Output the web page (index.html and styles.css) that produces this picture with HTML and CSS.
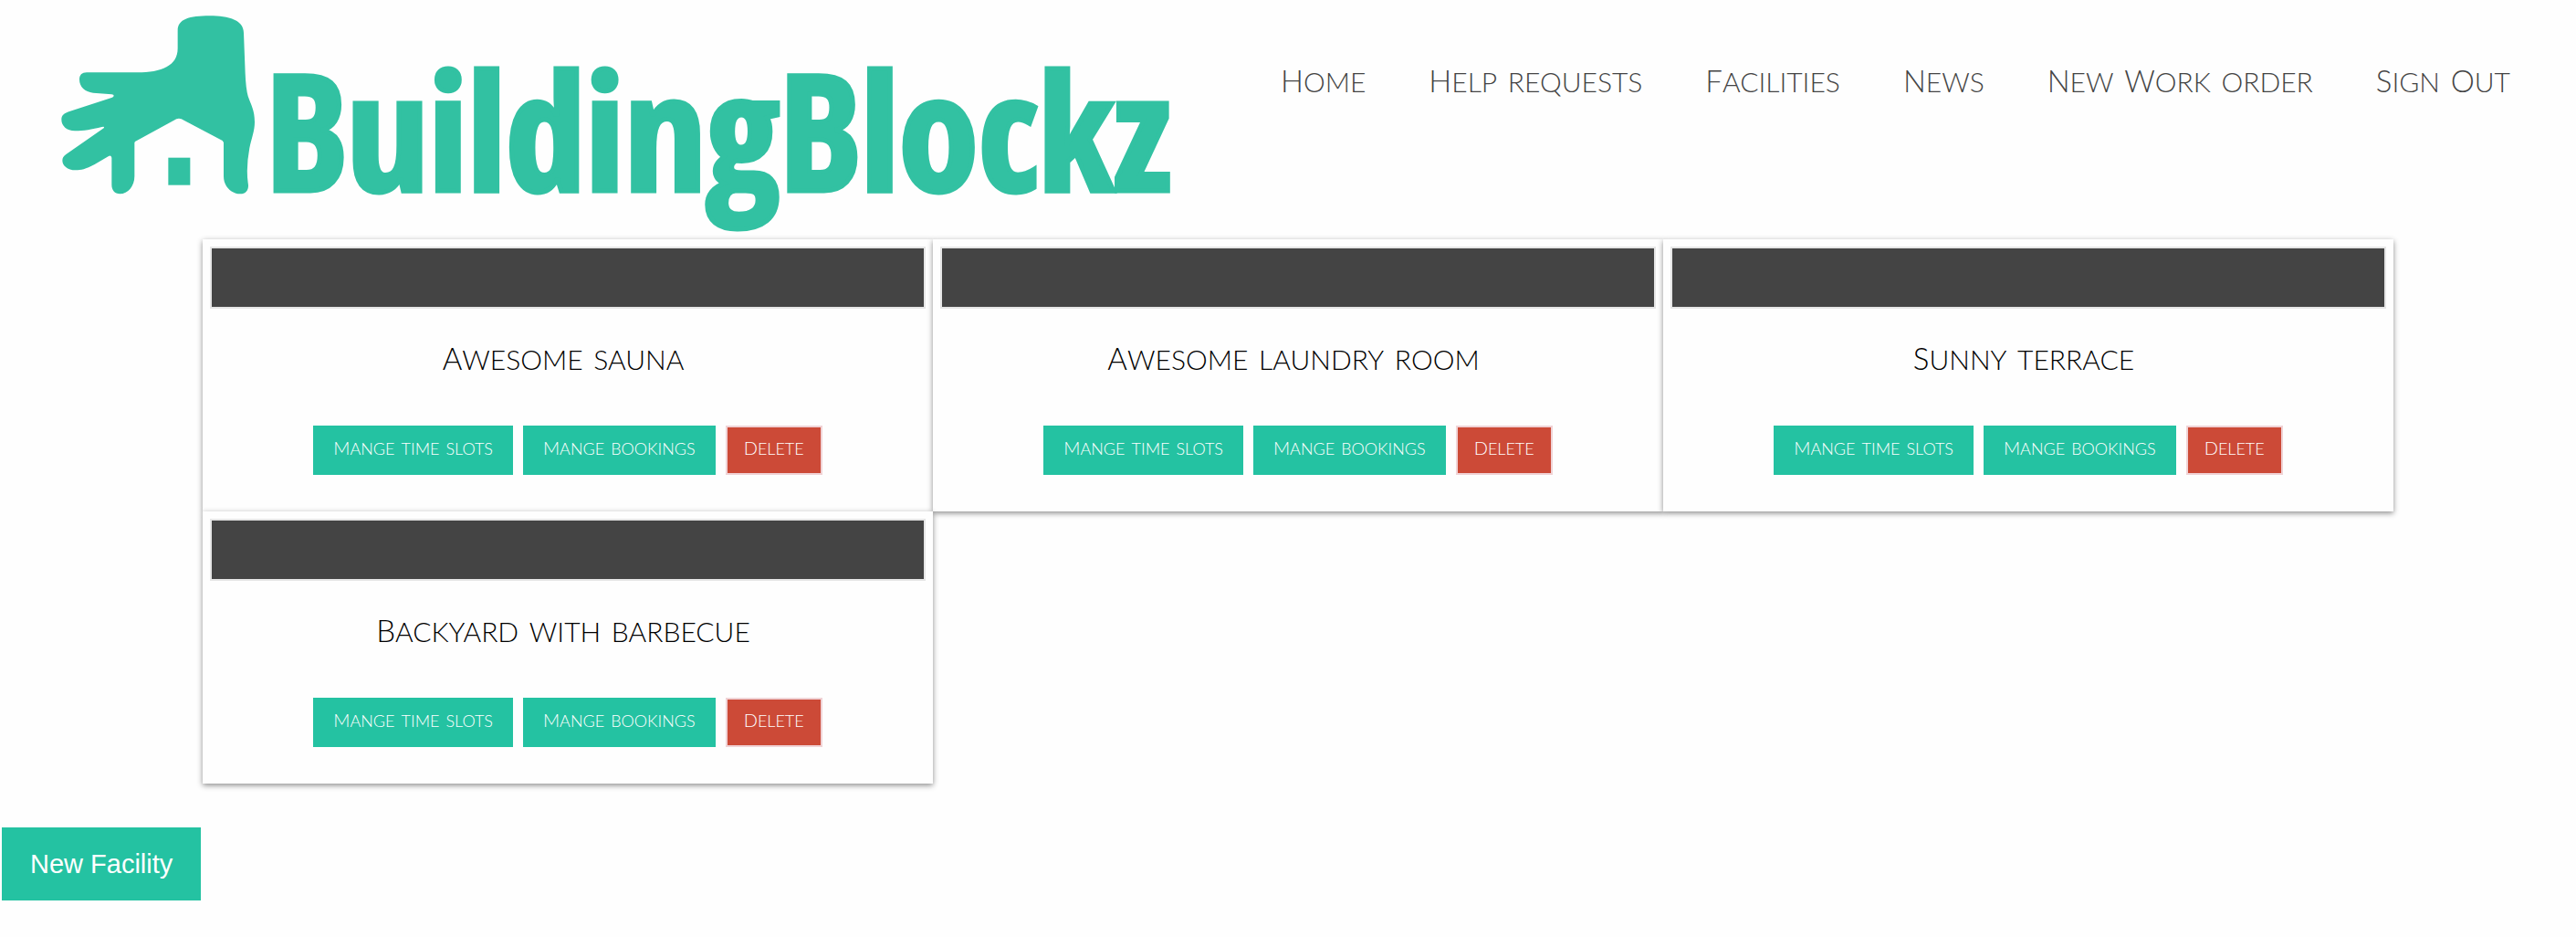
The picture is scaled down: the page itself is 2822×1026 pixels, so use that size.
FILE: index.html
```
<!DOCTYPE html>
<html lang="en">
<head>
<meta charset="utf-8">
<title>BuildingBlockz – Facilities</title>
<link rel="stylesheet" href="styles.css">
</head>
<body>
<header class="site-header">
  <a class="logo" href="#">
    <svg class="logo-mark" viewBox="50 50 636 588" aria-hidden="true">
      <path d="M433 100C433 62 470 51 538 51C605 51 650 66 650 108L655 240Q657 290 664 315C674 345 686 360 686 400C686 430 676 450 669 485Q657 550 664 600C668 620 660 636 638 636C610 636 584 612 584 578V467L580 461L445 390Q437 386 429 390L293 464L291 468V578C291 610 270 636 243 636C226 636 216 624 216 606V517Q214 508 206 512L160 539C130 555 115 558 98 558C70 558 54 542 54 526C54 517 58 512 66 506L190 420Q194 413 184 416C150 424 125 429 95 429C68 429 51 412 51 392C51 378 60 371 75 366L218 319Q229 311 216 309L155 304C128 301 110 284 110 260C110 246 118 237 134 237H300C380 237 433 215 433 158Z"/>
      <path d="M402 517H474V607H402Z"/>
    </svg>
    <span class="logo-text">BuildingBlockz</span>
  </a>
  <nav class="site-nav">
    <a class="caps" href="#">Home</a>
    <a class="caps" href="#">Help requests</a>
    <a class="caps" href="#">Facilities</a>
    <a class="caps" href="#">News</a>
    <a class="caps" href="#">New <span class="word">Work</span> order</a>
    <a class="caps" href="#">Sign <span class="word">Out</span></a>
  </nav>
</header>
<main>
  <section class="facilities">
    <article class="card">
      <div class="card-photo"></div>
      <h2 class="card-title caps">Awesome sauna</h2>
      <div class="card-actions">
        <a class="btn" href="#">Mange time slots</a>
        <a class="btn" href="#">Mange bookings</a>
        <button class="btn btn-delete" type="button">Delete</button>
      </div>
    </article>
    <article class="card">
      <div class="card-photo"></div>
      <h2 class="card-title caps">Awesome laundry room</h2>
      <div class="card-actions">
        <a class="btn" href="#">Mange time slots</a>
        <a class="btn" href="#">Mange bookings</a>
        <button class="btn btn-delete" type="button">Delete</button>
      </div>
    </article>
    <article class="card">
      <div class="card-photo"></div>
      <h2 class="card-title caps">Sunny terrace</h2>
      <div class="card-actions">
        <a class="btn" href="#">Mange time slots</a>
        <a class="btn" href="#">Mange bookings</a>
        <button class="btn btn-delete" type="button">Delete</button>
      </div>
    </article>
    <article class="card">
      <div class="card-photo"></div>
      <h2 class="card-title caps">Backyard with barbecue</h2>
      <div class="card-actions">
        <a class="btn" href="#">Mange time slots</a>
        <a class="btn" href="#">Mange bookings</a>
        <button class="btn btn-delete" type="button">Delete</button>
      </div>
    </article>
  </section>
  <a class="new-facility" href="#">New Facility</a>
</main>
</body>
</html>
```
FILE: styles.css
```
* { box-sizing: border-box; }

body {
  margin: 0;
  background: #fefefe;
  color: #000;
  font-family: Lato, "Open Sans", sans-serif;
  font-weight: 300;
}

a { color: inherit; text-decoration: none; }

/* Small caps with an initial only slightly taller than the rest */
.caps {
  font-size: 43px;
  line-height: 48px;
  font-variant: small-caps;
}
.caps::first-letter,
.word::first-letter { font-size: 33px; line-height: 1; }
.word { display: inline-block; }

.site-header {
  display: flex;
  justify-content: space-between;
  align-items: flex-start;
  padding: 17px 72px 49px 67px;
}
.logo {
  display: flex;
  align-items: flex-start;
  gap: 12px;
  color: #32c1a2;
}
.logo-mark { width: 212px; height: 196px; fill: currentColor; }
.logo-text {
  font-family: "Open Sans Condensed", "Roboto Condensed", "Liberation Sans", sans-serif;
  font-weight: 900;
  font-size: 176px;
  line-height: 196px;
  margin-top: 26px;
  height: 170px;
  -webkit-text-stroke: 5px currentColor;
}
.site-nav {
  display: flex;
  gap: 69px;
  padding-top: 44px;
  color: #444;
  white-space: nowrap;
}

.facilities {
  display: grid;
  grid-template-columns: repeat(3, 1fr);
  margin: 0 200px 0 222px;
}
.card {
  padding: 8px 8px 40px;
  background: #fefefe;
  box-shadow: 0 2px 6px rgba(0, 0, 0, 0.45);
}
.card-photo {
  height: 68px;
  background: #444;
  border: 2px solid #e6e6e6;
}
.card-title {
  margin: 27px 0 53px;
  padding-right: 10px;
  font-weight: 300;
  text-align: center;
}
.card-actions {
  display: flex;
  justify-content: center;
  gap: 11px;
}
.btn {
  display: block;
  min-width: 104px;
  padding: 6px 22px 16px;
  border: 0;
  background: #24c2a2;
  color: #fff;
  font-family: inherit;
  font-weight: 300;
  font-size: 26px;
  line-height: 32px;
  font-variant: small-caps;
  text-align: center;
}
.btn::first-letter { font-size: 20px; line-height: 1; }
.btn-delete {
  padding: 4px 18px 14px;
  border: 2px solid #f0d3d6;
  background: #cc4a37;
}

.new-facility {
  display: block;
  width: fit-content;
  margin: 48px 0 40px 2px;
  padding: 20px 31px;
  background: #24c2a2;
  color: #fff;
  font: 400 29px/40px "Liberation Sans", sans-serif;
}
```
